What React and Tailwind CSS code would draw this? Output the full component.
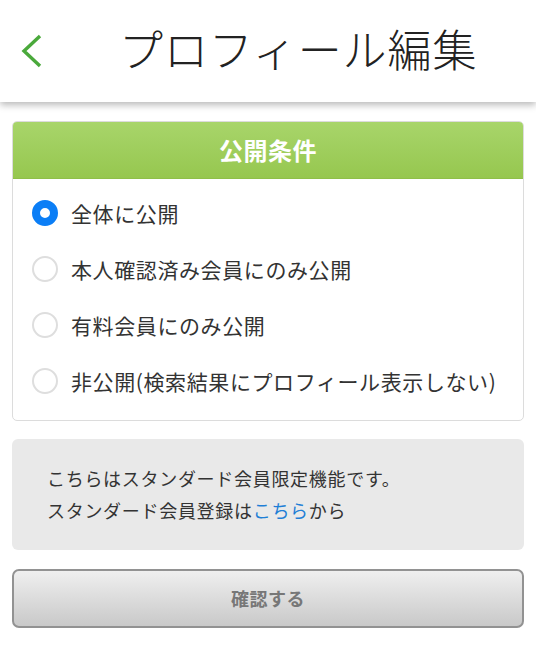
import React, { useState } from 'react';

const options = [
  '全体に公開',
  '本人確認済み会員にのみ公開',
  '有料会員にのみ公開',
  '非公開(検索結果にプロフィール表示しない)',
];

const App = () => {
  const [selected, setSelected] = useState(0);

  return (
    <div
      className="min-h-[653px] bg-white text-[#333]"
      style={{ fontFamily: '"Noto Sans CJK JP", "Noto Sans", sans-serif' }}
    >
      <header className="relative z-10 h-[102px] bg-white flex items-center shadow-[0_3px_7px_rgba(0,0,0,0.28)]">
        <button className="w-[64px] h-full flex items-center pl-[20px]">
          <svg width="24" height="36" viewBox="0 0 24 36" fill="none">
            <path d="M20 3 L4 18 L20 33" stroke="#4aa93b" strokeWidth="3.4" strokeLinecap="butt" strokeLinejoin="miter" />
          </svg>
        </button>
        <h1 className="ml-[55px] text-[44px] leading-none font-light text-[#222] tracking-[0.9px] pb-[6px]">
          プロフィール編集
        </h1>
      </header>

      <main className="px-[12px] pt-[19px] pb-[26px] flex flex-col gap-[18px]">
        <section className="border border-[#dcdcdc] rounded-[5px] overflow-hidden">
          <div className="h-[57px] flex items-center justify-center bg-gradient-to-b from-[#a8d56a] to-[#96c74f] border-b border-[#8fbf49]">
            <h2 className="text-white text-[24px] font-bold leading-none tracking-[0.5px]">公開条件</h2>
          </div>
          <div className="pt-[6px] pb-[11px]">
            {options.map((label, i) => (
              <label
                key={label}
                onClick={() => setSelected(i)}
                className="h-[56px] flex items-center pl-[19px] cursor-pointer"
              >
                {selected === i ? (
                  <span className="w-[26px] h-[26px] rounded-full border-[8px] border-[#0b7ef6] bg-white" />
                ) : (
                  <span className="w-[26px] h-[26px] rounded-full border-2 border-[#dedede] bg-white" />
                )}
                <span className="ml-[13px] text-[21px] leading-none text-[#333] tracking-[0.6px]">{label}</span>
              </label>
            ))}
          </div>
        </section>

        <div className="bg-[#e9e9e9] rounded-[6px] pl-[35px] pt-[23px] pb-[24px] text-[18px] leading-[32px] text-[#333] tracking-[0.7px]">
          <p>こちらはスタンダード会員限定機能です。</p>
          <p>
            スタンダード会員登録は<a className="text-[#1f7fd6]">こちら</a>から
          </p>
        </div>

        <button className="h-[59px] mt-[1px] w-full rounded-[7px] border-2 border-[#929292] bg-gradient-to-b from-[#efefef] to-[#c9c9c9] text-[18px] font-bold text-[#777] tracking-[0.5px]">
          確認する
        </button>
      </main>
    </div>
  );
};

export default App;
